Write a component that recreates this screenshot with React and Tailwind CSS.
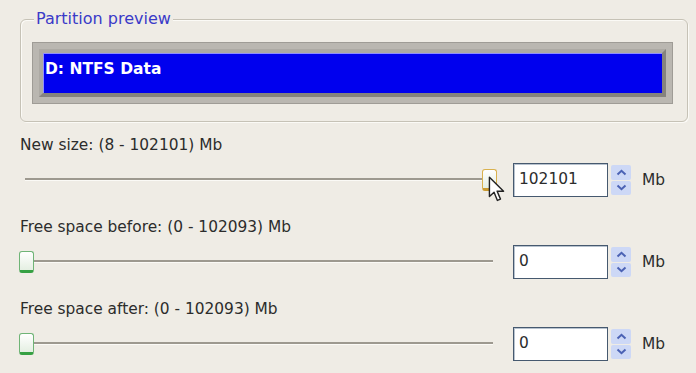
import React from "react";

function Handle({ hot, className }) {
  return (
    <div
      className={
        "absolute top-0 h-[22px] w-[15px] rounded-[3px] border border-b-[3px] bg-gradient-to-b from-white to-[#e4efe2] " +
        (hot
          ? "border-[#d9b14e] border-b-[#c99a30]"
          : "border-[#6fb476] border-b-[#36a043]") +
        " " +
        className
      }
    />
  );
}

function Cursor() {
  return (
    <svg
      className="absolute left-[470px] top-[7px]"
      width="17"
      height="27"
      viewBox="0 0 13 21"
    >
      <path
        d="M1 1 L1 16 L4.6 12.6 L7.2 19 L9.6 18 L7 11.8 L12 11.8 Z"
        fill="#ffffff"
        stroke="#222"
        strokeWidth="1.1"
        strokeLinejoin="round"
      />
    </svg>
  );
}

function Slider({ atEnd }) {
  return (
    <div className="relative h-[22px] w-[479px] shrink-0">
      <div
        className={
          "mt-[9px] h-[3px] border-b border-[#fbfaf6] bg-[#9d998f] " +
          (atEnd ? "ml-[7px] mr-[15px]" : "ml-[16px] mr-[4px]")
        }
      />
      {atEnd ? <Handle hot className="left-[464px]" /> : <Handle className="left-[1px]" />}
      {atEnd ? <Cursor /> : null}
    </div>
  );
}

function Spin({ value }) {
  return (
    <div className="flex items-center">
      <div className="flex h-[34px] w-[95px] items-center border border-[#46596f] bg-white pl-[5px] shadow-[inset_1px_1px_0_#b8c3cf] text-[15.4px] text-[#2c2c2c]">
        {value}
      </div>
      <div className="ml-[3px] flex h-[30px] w-[20px] flex-col gap-[1px]">
        <div className="flex flex-1 items-center justify-center rounded-[2px] bg-[#cdd8f6]">
          <svg width="11" height="7" viewBox="0 0 11 7">
            <path d="M1.5 5.5 L5.5 1.8 L9.5 5.5" fill="none" stroke="#4b62b4" strokeWidth="2" />
          </svg>
        </div>
        <div className="flex flex-1 items-center justify-center rounded-[2px] bg-[#cdd8f6]">
          <svg width="11" height="7" viewBox="0 0 11 7">
            <path d="M1.5 1.5 L5.5 5.2 L9.5 1.5" fill="none" stroke="#4b62b4" strokeWidth="2" />
          </svg>
        </div>
      </div>
      <div className="ml-[11px] text-[15.4px] leading-[18px] text-[#2c2c2c]">Mb</div>
    </div>
  );
}

function Row({ label, value, atEnd, className }) {
  return (
    <div className={className}>
      <div className="pl-[20px] text-[15.4px] leading-[18px] text-[#2c2c2c]">{label}</div>
      <div className="mt-[9px] flex h-[34px] items-center pl-[18px]">
        <Slider atEnd={atEnd} />
        <div className="ml-[16px]">
          <Spin value={value} />
        </div>
      </div>
    </div>
  );
}

export default function App() {
  return (
    <div className="h-[373px] w-[696px] overflow-hidden bg-[#efece5] pt-[19px] font-['DejaVu_Sans',sans-serif]">
      <div className="relative ml-[20px] h-[103px] w-[668px] rounded-[6px] border border-[#c6c2b6] pl-[11px] pt-[22px] shadow-[inset_1px_1px_0_#fbfaf6,1px_1px_0_#fbfaf6]">
        <span className="absolute left-[13px] top-[-11px] bg-[#efece5] px-[2px] text-[16px] leading-[20px] text-[#3a3ac8]">
          Partition preview
        </span>
        <div className="h-[62px] w-[641px] border border-[#9f9c96] bg-[#bab7b1] p-[6px]">
          <div className="h-full w-full border-4 border-l-[#adaaa4] border-t-[#adaaa4] border-r-[#85837e] border-b-[#85837e]">
            <div className="h-full w-full border-l border-t border-[#8f8fff] bg-[#0000ee] pl-[1px] pt-[6px] text-[15.5px] font-bold leading-[18px] text-white">
              D: NTFS Data
            </div>
          </div>
        </div>
      </div>
      <Row className="mt-[14px]" label="New size: (8 - 102101) Mb" value="102101" atEnd />
      <Row className="mt-[21px]" label="Free space before: (0 - 102093) Mb" value="0" />
      <Row className="mt-[21px]" label="Free space after: (0 - 102093) Mb" value="0" />
    </div>
  );
}
